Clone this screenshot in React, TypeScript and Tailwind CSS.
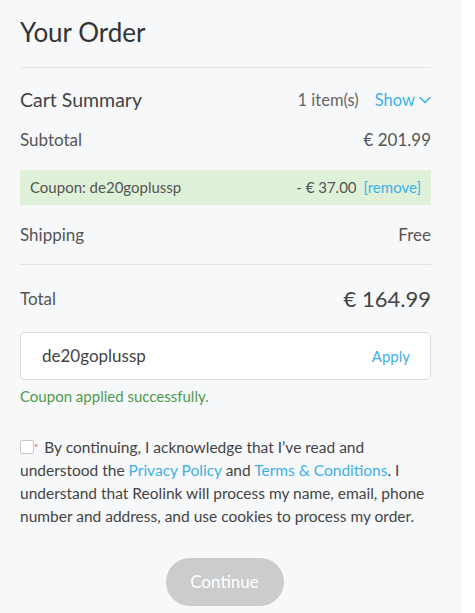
import React from 'react';

const font = { fontFamily: 'Lato, "Open Sans", sans-serif' };

export default function App() {
    return (
        <div className="min-h-[613px] w-[462px] bg-[#f7f8fa] pl-[20px] pr-[31px] pt-[15px]" style={font}>
            <h1 className="text-[26px] leading-[34px] text-[#333] pb-[18px] border-b border-[#e5e6e8]">Your Order</h1>

            <div className="flex items-center justify-between h-[56px] pt-[8px]">
                <span className="text-[19.5px] text-[#444]">Cart Summary</span>
                <div className="flex items-center gap-[16px] text-[16.5px]">
                    <span className="text-[#666]">1 item(s)</span>
                    <span className="flex items-center gap-[4px] text-[#3cb0e8]">
                        Show
                        <svg width="12" height="8" viewBox="0 0 12 8" fill="none">
                            <path d="M1 1.5l5 5 5-5" stroke="#3cb0e8" strokeWidth="1.5" strokeLinecap="round" strokeLinejoin="round" />
                        </svg>
                    </span>
                </div>
            </div>

            <div className="flex items-center justify-between h-[32px] text-[17px] text-[#555]">
                <span>Subtotal</span>
                <span>€ 201.99</span>
            </div>

            <div className="flex items-center justify-between h-[35px] mt-[14px] bg-[#dff1d8] px-[10px] text-[15px] text-[#555]">
                <span>Coupon: de20goplussp</span>
                <span className="flex gap-[7px]">
                    <span>- € 37.00</span>
                    <span className="text-[#3cb0e8]">[remove]</span>
                </span>
            </div>

            <div className="flex items-center justify-between h-[60px] border-b border-[#e2e3e5] text-[17px] text-[#555]">
                <span>Shipping</span>
                <span>Free</span>
            </div>

            <div className="flex items-center justify-between h-[67px] text-[#555]">
                <span className="text-[17px]">Total</span>
                <span className="text-[22px] text-[#444]">€ 164.99</span>
            </div>

            <div className="flex items-center justify-between h-[48px] bg-white border border-[#dcdcdc] rounded-[5px] pl-[21px] pr-[20px]">
                <span className="text-[17px] text-[#444]">de20goplussp</span>
                <span className="text-[15px] text-[#3cb0e8]">Apply</span>
            </div>

            <p className="text-[15px] text-[#4f9a4f] mt-[6px] leading-[20px]">Coupon applied successfully.</p>

            <div className="mt-[30px] text-[15.5px] leading-[23px] text-[#444]">
                <span className="inline-block w-[14px] h-[14px] border border-[#c8c8c8] bg-white rounded-[2px] align-[-1px]" />
                <span className="text-[#e05050] text-[10px] align-top mr-[2px]">*</span>
                {' '}By continuing, I acknowledge that I’ve read and understood the{' '}
                <span className="text-[#3cb0e8]">Privacy Policy</span> and{' '}
                <span className="text-[#3cb0e8]">Terms &amp; Conditions</span>. I understand that Reolink will process my name, email, phone number and address, and use cookies to process my order.
            </div>

            <div className="flex justify-center mt-[30px] pr-[2px]">
                <button className="w-[118px] h-[48px] rounded-full bg-[#cccccc] text-white text-[17px]">Continue</button>
            </div>
        </div>
    );
}
